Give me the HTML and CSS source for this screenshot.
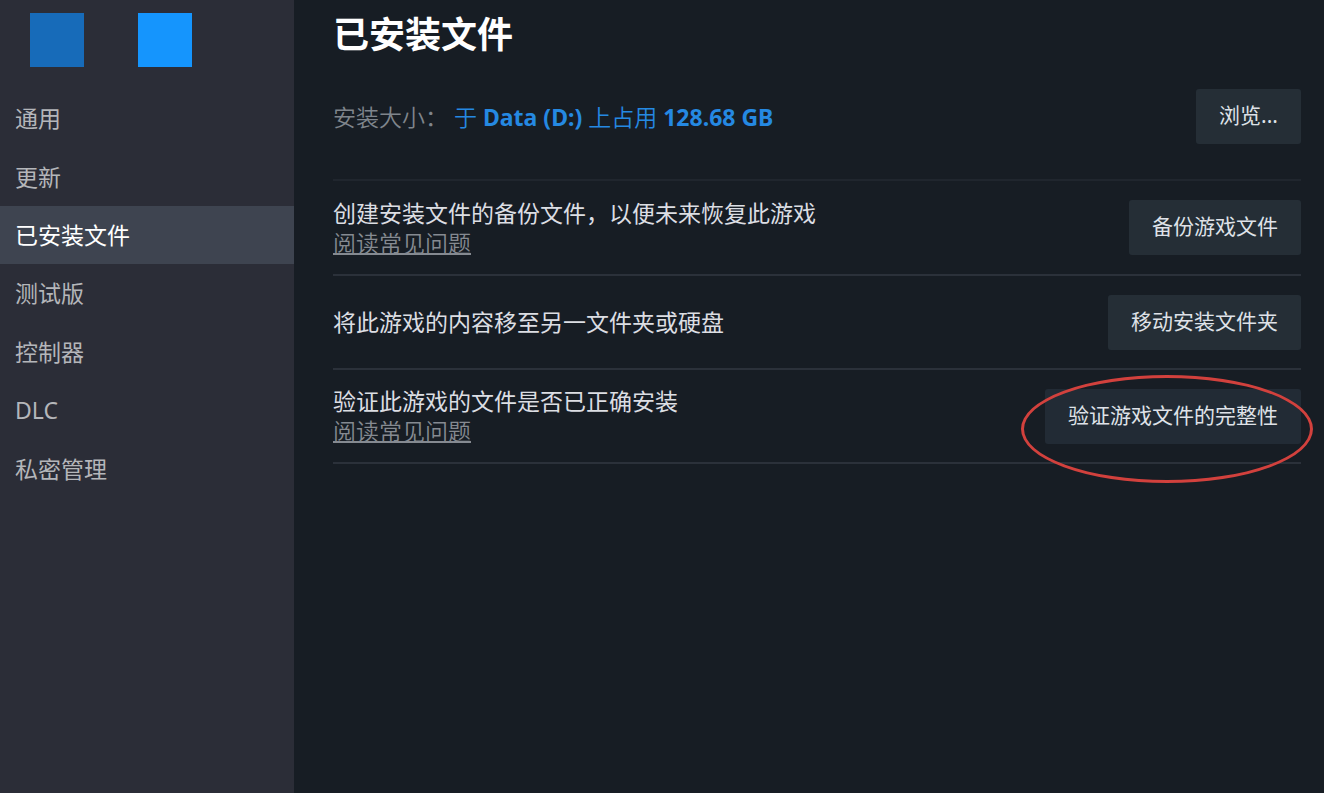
FILE: index.html
```html
<!DOCTYPE html>
<html lang="zh-CN">
<head>
<meta charset="utf-8">
<meta name="viewport" content="width=device-width, initial-scale=1">
<title>已安装文件</title>
<link rel="stylesheet" href="styles.css">
</head>
<body>
<div class="window">
  <aside class="sidebar">
    <div class="swatches">
      <span class="swatch swatch-dark"></span>
      <span class="swatch swatch-light"></span>
    </div>
    <nav class="nav">
      <a class="nav-item" href="#general">通用</a>
      <a class="nav-item" href="#updates">更新</a>
      <a class="nav-item active" href="#files" aria-current="page">已安装文件</a>
      <a class="nav-item" href="#betas">测试版</a>
      <a class="nav-item" href="#controller">控制器</a>
      <a class="nav-item" href="#dlc">DLC</a>
      <a class="nav-item" href="#privacy">私密管理</a>
    </nav>
  </aside>
  <main class="content">
    <h1 class="title">已安装文件</h1>
    <section class="size-row">
      <p class="size"><span class="size-label">安装大小：</span><span class="size-value">于 <b>Data (D:)</b> 上占用 <b>128.68 GB</b></span></p>
      <button class="button" type="button">浏览...</button>
    </section>
    <section class="row row-first">
      <div class="text">
        <p class="description">创建安装文件的备份文件，以便未来恢复此游戏</p>
        <a class="faq" href="#backup-faq">阅读常见问题</a>
      </div>
      <button class="button" type="button">备份游戏文件</button>
    </section>
    <section class="row">
      <div class="text">
        <p class="description">将此游戏的内容移至另一文件夹或硬盘</p>
      </div>
      <button class="button" type="button">移动安装文件夹</button>
    </section>
    <section class="row">
      <div class="text">
        <p class="description">验证此游戏的文件是否已正确安装</p>
        <a class="faq" href="#verify-faq">阅读常见问题</a>
      </div>
      <div class="marked">
        <button class="button button-quiet" type="button">验证游戏文件的完整性</button>
        <span class="ring"></span>
      </div>
    </section>
  </main>
</div>
</body>
</html>
```
FILE: styles.css
```css
* {
  box-sizing: border-box;
}

body {
  margin: 0;
  background: #171d24;
  color: #dcdee3;
  font-family: "Noto Sans", "Noto Sans CJK SC", sans-serif;
  font-size: 23px;
  line-height: 30px;
}

h1,
p {
  margin: 0;
}

.window {
  display: flex;
  min-height: 100vh;
}

.sidebar {
  flex: 0 0 294px;
  background: #2b2d37;
}

.swatches {
  display: flex;
  gap: 54px;
  padding: 13px 30px 22px;
}

.swatch {
  width: 54px;
  height: 54px;
}

.swatch-dark {
  background: #176bb9;
}

.swatch-light {
  background: #1595fd;
}

.nav {
  display: grid;
  grid-auto-rows: 1fr;
  min-height: 409px;
}

.nav-item {
  display: flex;
  align-items: center;
  padding: 0 15px;
  color: #b4b6ba;
  text-decoration: none;
}

.nav-item.active {
  background: #3e4450;
  color: #fff;
}

.content {
  flex: 1;
  min-width: 0;
  padding: 11px 23px 24px 39px;
}

.title {
  color: #fff;
  font-size: 36px;
  font-weight: 700;
  line-height: 48px;
}

.size-row {
  display: flex;
  align-items: center;
  justify-content: space-between;
  padding: 30px 0 35px;
}

.size {
  display: flex;
  flex-wrap: wrap;
  column-gap: 6px;
  font-weight: 350;
}

.size-label {
  color: #7f858c;
}

.size-value {
  color: #2589e2;
}

.size-value b {
  font-weight: 700;
}

.row {
  display: flex;
  align-items: center;
  justify-content: space-between;
  gap: 24px;
  min-height: 94px;
  padding: 16px 0;
  border-bottom: 2px solid #2b313a;
}

.row-first {
  min-height: 97px;
  border-top: 2px solid #20262e;
}

.faq {
  display: block;
  width: fit-content;
  color: #858a91;
  font-weight: 350;
  text-decoration: underline;
  text-decoration-thickness: 2px;
}

.button {
  display: block;
  flex: none;
  min-height: 55px;
  padding: 0 23px 3px;
  border: 0;
  border-radius: 3px;
  background: #252e36;
  color: #dfe2e8;
  font: inherit;
  font-size: 21px;
  cursor: pointer;
}

.button-quiet {
  background: #222b35;
}

.marked {
  position: relative;
  flex: none;
}

.ring {
  position: absolute;
  inset: -14px -12px -39px -24px;
  border: 3px solid #d2413d;
  border-radius: 50%;
  pointer-events: none;
}
```
